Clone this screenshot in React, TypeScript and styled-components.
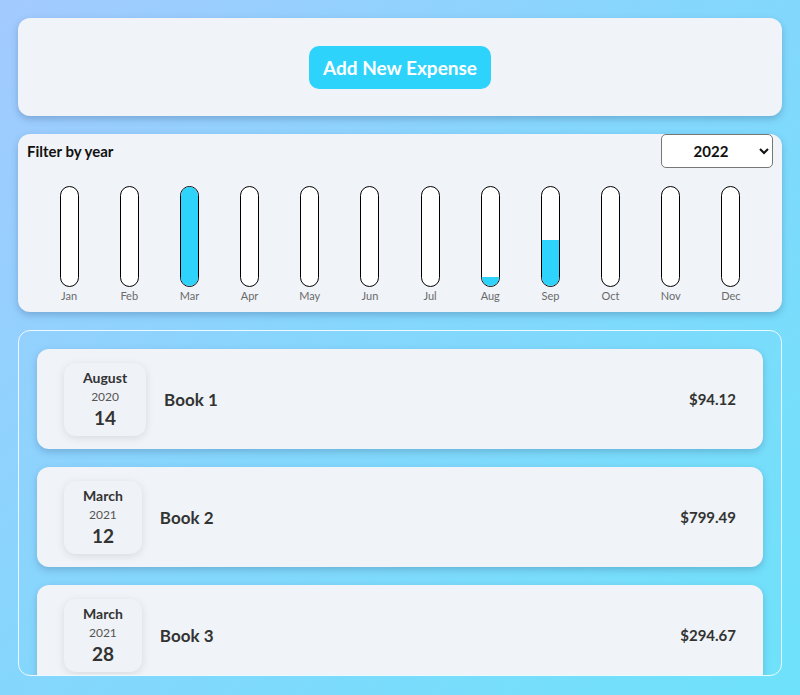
import React, { useState } from 'react';
import styled, { createGlobalStyle } from 'styled-components';

const GlobalStyle = createGlobalStyle`
    html, body {
        margin: 0;
        padding: 0;
    }
    body {
        font-family: Lato, "Liberation Sans", sans-serif;
        background: linear-gradient(135deg, #a3caff 0%, #86d6fd 45%, #6ee2fa 100%);
        min-height: 100vh;
    }
`;

const Page = styled.div`
    display: flex;
    flex-direction: column;
    gap: 18px;
    padding: 18px;
    box-sizing: border-box;
    min-height: 100vh;
`;

const Panel = styled.section`
    background: #f0f3f8;
    border-radius: 12px;
    box-shadow: 0 3px 7px rgba(40, 70, 110, 0.28);
`;

const NewExpense = styled(Panel)`
    display: flex;
    justify-content: center;
    align-items: center;
    height: 98px;
`;

const AddButton = styled.button`
    font-family: inherit;
    font-size: 19px;
    font-weight: 700;
    color: #ffffff;
    background: #2ed3fc;
    border: none;
    border-radius: 10px;
    width: 182px;
    height: 43px;
    cursor: pointer;
`;

const ChartPanel = styled(Panel)`
    padding-bottom: 10px;
`;

const FilterRow = styled.div`
    display: flex;
    justify-content: space-between;
    align-items: center;
    padding: 0 9px;
`;

const FilterLabel = styled.label`
    font-size: 15px;
    font-weight: 700;
    color: #111;
`;

const YearSelect = styled.select`
    width: 112px;
    height: 34px;
    font-family: inherit;
    font-size: 15px;
    font-weight: 700;
    color: #111;
    background: #fff;
    border: 1px solid #777;
    border-radius: 5px;
    text-align: center;
    text-align-last: center;
`;

const Chart = styled.div`
    display: grid;
    grid-template-columns: repeat(12, 1fr);
    padding: 18px 21px 0;
`;

const BarColumn = styled.div`
    display: flex;
    flex-direction: column;
    align-items: center;
    gap: 2px;
`;

const BarTrack = styled.div`
    width: 17px;
    height: 99px;
    border: 1px solid #000;
    border-radius: 10px;
    background: #fff;
    overflow: hidden;
    display: flex;
    flex-direction: column;
    justify-content: flex-end;
`;

const BarFill = styled.div`
    width: 100%;
    background: #2ed3fc;
`;

const BarLabel = styled.span`
    font-size: 11px;
    color: #6a6a6a;
`;

const ListPanel = styled.section`
    display: flex;
    flex-direction: column;
    gap: 18px;
    height: 308px;
    padding: 18px;
    border: 1px solid rgba(255, 255, 255, 0.85);
    border-radius: 12px;
    overflow: hidden;
`;

const ExpenseCard = styled.article`
    flex: 0 0 100px;
    display: flex;
    align-items: center;
    padding: 0 27px;
    background: #f0f3f8;
    border-radius: 12px;
    box-shadow: 0 3px 7px rgba(40, 70, 110, 0.25);
`;

const DateBox = styled.div`
    display: flex;
    flex-direction: column;
    align-items: center;
    justify-content: center;
    height: 73px;
    padding: 0 19px;
    background: #eff2f6;
    border-radius: 12px;
    box-shadow: 0 2px 9px rgba(0, 0, 0, 0.1);
`;

const DateMonth = styled.span`
    font-size: 14px;
    font-weight: 700;
    line-height: 18px;
    color: #333;
`;

const DateYear = styled.span`
    font-size: 12px;
    line-height: 19px;
    color: #555;
`;

const DateDay = styled.span`
    font-size: 19px;
    font-weight: 700;
    line-height: 24px;
    color: #333;
`;

const ExpenseTitle = styled.h2`
    flex: 1;
    margin: 0 0 0 18px;
    font-size: 17px;
    font-weight: 700;
    color: #333;
`;

const ExpensePrice = styled.span`
    font-size: 15px;
    font-weight: 700;
    color: #333;
`;

const months = ['Jan', 'Feb', 'Mar', 'Apr', 'May', 'Jun', 'Jul', 'Aug', 'Sep', 'Oct', 'Nov', 'Dec'];

// share of the year's biggest month, per month
const fills = [0, 0, 100, 0, 0, 0, 0, 9, 46, 0, 0, 0];

const expenses = [
    { id: 'e1', month: 'August', year: 2020, day: 14, title: 'Book 1', amount: 94.12 },
    { id: 'e2', month: 'March', year: 2021, day: 12, title: 'Book 2', amount: 799.49 },
    { id: 'e3', month: 'March', year: 2021, day: 28, title: 'Book 3', amount: 294.67 },
];

const App = () => {
    const [year, setYear] = useState('2022');

    return (
        <>
            <GlobalStyle />
            <Page>
                <NewExpense>
                    <AddButton>Add New Expense</AddButton>
                </NewExpense>

                <ChartPanel>
                    <FilterRow>
                        <FilterLabel>Filter by year</FilterLabel>
                        <YearSelect value={year} onChange={e => setYear(e.target.value)}>
                            <option value="2022">2022</option>
                            <option value="2021">2021</option>
                            <option value="2020">2020</option>
                            <option value="2019">2019</option>
                        </YearSelect>
                    </FilterRow>
                    <Chart>
                        {months.map((m, i) => (
                            <BarColumn key={m}>
                                <BarTrack>
                                    <BarFill style={{ height: `${fills[i]}%` }} />
                                </BarTrack>
                                <BarLabel>{m}</BarLabel>
                            </BarColumn>
                        ))}
                    </Chart>
                </ChartPanel>

                <ListPanel>
                    {expenses.map(item => (
                        <ExpenseCard key={item.id}>
                            <DateBox>
                                <DateMonth>{item.month}</DateMonth>
                                <DateYear>{item.year}</DateYear>
                                <DateDay>{item.day}</DateDay>
                            </DateBox>
                            <ExpenseTitle>{item.title}</ExpenseTitle>
                            <ExpensePrice>${item.amount}</ExpensePrice>
                        </ExpenseCard>
                    ))}
                </ListPanel>
            </Page>
        </>
    );
};

export default App;
